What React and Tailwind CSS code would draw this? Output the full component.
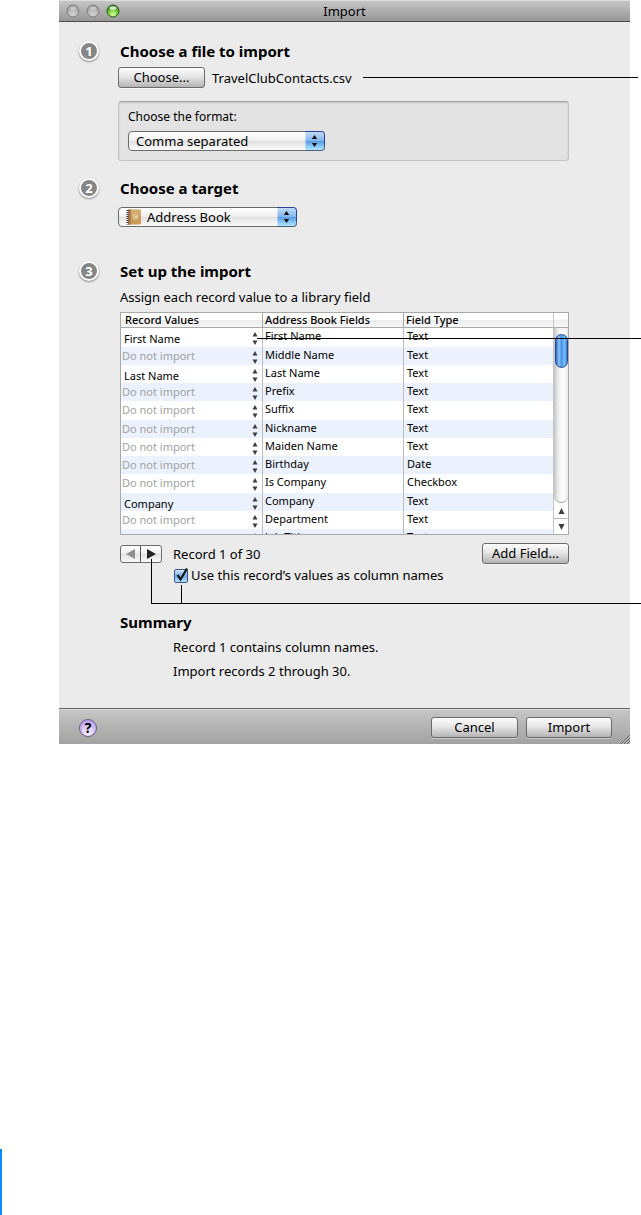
import React from "react";

const rows = [
  ["First Name", "First Name", "Text"],
  ["", "Middle Name", "Text"],
  ["Last Name", "Last Name", "Text"],
  ["", "Prefix", "Text"],
  ["", "Suffix", "Text"],
  ["", "Nickname", "Text"],
  ["", "Maiden Name", "Text"],
  ["", "Birthday", "Date"],
  ["", "Is Company", "Checkbox"],
  ["Company", "Company", "Text"],
  ["", "Department", "Text"],
  ["", "Job Title", "Text"],
];

const silver =
  "border border-[#6b6b6b] bg-[linear-gradient(#ffffff_0%,#f1f1f1_45%,#e2e2e2_52%,#fbfbfb_100%)]";
const push =
  "flex h-[21px] items-center justify-center rounded-[3px] border border-[#6b6b6b] bg-[linear-gradient(#fdfdfd_0%,#e6e6e6_45%,#b4b4b4_100%)] text-[13px] leading-none shadow-[0_1px_0_rgba(255,255,255,0.4)]";

function Light({ green }) {
  return (
    <svg width="14" height="14" viewBox="0 0 14 14" aria-hidden="true">
      <defs>
        <radialGradient id={green ? "lg" : "lx"} cx="50%" cy="80%" r="75%">
          <stop offset="0" stopColor={green ? "#d4ff9c" : "#d2d2d2"} />
          <stop offset="0.5" stopColor={green ? "#7fd043" : "#bababa"} />
          <stop offset="1" stopColor={green ? "#2e7a13" : "#8f8f8f"} />
        </radialGradient>
      </defs>
      <circle cx="7" cy="7" r="6" fill={green ? "url(#lg)" : "url(#lx)"} stroke={green ? "#2f5a1d" : "#818181"} />
      <ellipse cx="7" cy="4" rx="3.4" ry="1.8" fill="#fff" opacity={green ? 0.75 : 0.35} />
    </svg>
  );
}

function Badge({ n }) {
  return (
    <span className="flex size-5 shrink-0 items-center justify-center rounded-full border-2 border-white bg-[#868686] text-[13px] leading-none font-bold text-white shadow-[0_1px_2px_rgba(0,0,0,0.45)]">
      {n}
    </span>
  );
}

function Heading({ n, children }) {
  return (
    <div className="flex h-5 items-center">
      <Badge n={n} />
      <h2 className="ml-[21px] text-[15px] leading-5 font-bold">{children}</h2>
    </div>
  );
}

function BlueCap() {
  return (
    <svg className="pointer-events-none absolute top-0 right-0" width="20" height="20" viewBox="0 0 20 20" aria-hidden="true">
      <defs>
        <linearGradient id="cap" x1="0" y1="0" x2="0" y2="1">
          <stop offset="0" stopColor="#c4dcf6" />
          <stop offset="0.47" stopColor="#86b8ee" />
          <stop offset="0.53" stopColor="#5a9fe8" />
          <stop offset="1" stopColor="#b4ebff" />
        </linearGradient>
      </defs>
      <path d="M0.5 0.5H16.5Q19.5 0.5 19.5 3.5V16.5Q19.5 19.5 16.5 19.5H0.5Z" fill="url(#cap)" />
      <path d="M0 0.5H16.5Q19.5 0.5 19.5 3.5V14" fill="none" stroke="#2c3f98" />
      <path d="M19.5 14V16.5Q19.5 19.5 16.5 19.5H0" fill="none" stroke="#4c5b78" />
      <path d="M9.500 4L12.200 8H6.800ZM9.500 16L12.200 12H6.800Z" fill="#111" />
    </svg>
  );
}

function Popup({ label, value, wide, icon }) {
  return (
    <div className={wide ? "relative h-5 w-[197px]" : "relative h-5 w-[179px]"}>
      <select
        aria-label={label}
        className={`h-5 w-full appearance-none rounded-[4px] text-[13px] leading-[18px] ${silver} ${icon ? "pl-[28px]" : "pl-[7px]"}`}
      >
        <option>{value}</option>
      </select>
      {icon}
      <BlueCap />
    </div>
  );
}

function BookIcon() {
  return (
    <svg className="pointer-events-none absolute top-[2px] left-[8px]" width="16" height="16" viewBox="0 0 16 16" aria-hidden="true">
      <rect x="2" y="0.500" width="13" height="15" rx="1" fill="#c99c58" />
      <rect x="2" y="0.500" width="3" height="15" fill="#a87b50" />
      <rect x="5" y="1" width="10" height="6" fill="#d9b478" opacity="0.6" />
      <path d="M1.500 1V15.500" stroke="#3d302b" strokeWidth="2" strokeDasharray="1 1" />
      <circle cx="9.500" cy="8" r="2.500" fill="none" stroke="#f4e3bf" strokeWidth="0.700" />
      <circle cx="9.500" cy="8" r="0.900" fill="#f4e3bf" />
      <path d="M10.600 7V9" stroke="#f4e3bf" strokeWidth="0.700" />
    </svg>
  );
}

function Row({ value, field, type, index }) {
  // Every fourth row is a pixel taller, for an average pitch just over 18px.
  return (
    <tr className={`${index % 4 ? "h-[18px]" : "h-[19px]"} ${index % 2 ? "bg-[#ebf1fd]" : "bg-white"}`}>
      <td className="border-r border-[#bdbdbd] p-0 align-top">
        <div className="relative h-[18px]">
          <select
            aria-label={`Record value for ${field}`}
            className={
              value
                ? "block h-[18px] w-full appearance-none pt-[3px] pl-[3px] text-[11px] leading-[15px] text-black"
                : "block h-[18px] w-full appearance-none pl-px text-[11px] leading-4 text-[#a2a2a2]"
            }
          >
            <option>{value || "Do not import"}</option>
          </select>
          <svg className="pointer-events-none absolute top-[4px] right-[4px]" width="6" height="13" viewBox="0 0 6 13" aria-hidden="true">
            <path d="M3 0L5.500 4.500H0.500ZM3 13L5.500 8.500H0.500Z" fill="#3c3c3c" />
          </svg>
        </div>
      </td>
      <td className="border-r border-[#bdbdbd] p-0 pl-[2px] align-top leading-4">{field}</td>
      <td className="p-0 pl-[3px] align-top leading-4">{type}</td>
    </tr>
  );
}

function ScrollBar() {
  return (
    <div className="flex w-[15px] shrink-0 flex-col border-l border-[#c4c4c4] bg-white">
      <div className="h-[15px] border-b border-[#a9a9a9] bg-[linear-gradient(#ffffff_0%,#ffffff_45%,#ececec_50%,#f8f8f8_100%)]" />
      <div className="flex-1 rounded-b-[7px] border-b border-[#a0a0a0] bg-[linear-gradient(90deg,#c4c4c4_0%,#eeeeee_30%,#ffffff_65%,#e8e8e8_100%)] pt-[6px]">
        <div className="mx-auto h-[34px] w-[13px] rounded-full border border-[#27488f] bg-[linear-gradient(90deg,#2a63c4_0%,#8cbcf2_25%,#7db4f0_38%,#3f8de6_45%,#77c4ff_80%,#2f6fc9_100%)]" />
      </div>
      <button type="button" aria-label="Scroll up" className="flex h-4 items-center justify-center border-b border-[#b9b9b9]">
        <svg width="7" height="6" viewBox="0 0 7 6" aria-hidden="true"><path d="M3.500 0L6.500 6H0.500Z" fill="#3d3d3d" /></svg>
      </button>
      <button type="button" aria-label="Scroll down" className="flex h-[15px] items-center justify-center">
        <svg width="7" height="6" viewBox="0 0 7 6" aria-hidden="true"><path d="M3.500 6L6.500 0H0.500Z" fill="#3d3d3d" /></svg>
      </button>
    </div>
  );
}

const th = "h-[15px] border-b border-[#a9a9a9] p-0 text-left text-[11px] leading-[14px] font-medium";

export default function App() {
  return (
    <div className="relative flex min-h-screen flex-col bg-white font-['Noto_Sans','Open_Sans',sans-serif] text-black">
      <main className="mr-[11px] ml-[59px] bg-[#ebebeb] text-[13px]">
        <header className="grid h-[22px] grid-cols-[1fr_auto_1fr] items-center border-t border-b border-t-[#dedede] border-b-[#4c4c4c] bg-[linear-gradient(#c5c5c5,#979797)]">
          <div className="flex gap-[6px] pl-[7px]">
            <Light />
            <Light />
            <Light green />
          </div>
          <h1 className="text-[13px] leading-5">Import</h1>
        </header>

        <div className="pt-[19px] pr-[61px] pl-[20px]">
          <section>
            <Heading n="1">Choose a file to import</Heading>
            <div className="mt-[6px] flex items-center pl-[39px]">
              <button type="button" className={`${push} w-[87px]`}>Choose...</button>
              <span className="ml-[7px] text-[13px] leading-5">TravelClubContacts.csv</span>
            </div>
            <div className="mt-[13px] ml-[39px] h-[60px] rounded-[3px] border border-[#c4c4c4] border-t-[#a4a4a4] bg-[#e3e3e3] px-[9px] pt-[6px] shadow-[inset_0_1px_2px_rgba(0,0,0,0.15)]">
              <div className="mb-[5px] text-[12px] leading-[18px]">Choose the format:</div>
              <Popup label="Choose the format" value="Comma separated" wide />
            </div>
          </section>

          <section className="mt-[17px]">
            <Heading n="2">Choose a target</Heading>
            <div className="mt-[9px] pl-[39px]">
              <Popup label="Choose a target" value="Address Book" icon={<BookIcon />} />
            </div>
          </section>

          <section className="mt-[34px]">
            <Heading n="3">Set up the import</Heading>
            <div className="pl-[41px]">
              <p className="mt-[6px] text-[13px] leading-[20px]">Assign each record value to a library field</p>
              <div className="mt-[5px] flex h-[223px] overflow-hidden border border-[#a9a9a9] bg-white">
                <div className="min-w-0 flex-1 overflow-hidden">
                  <table className="w-full table-fixed border-separate border-spacing-0 text-[11px]">
                    <colgroup>
                      <col className="w-[142px]" />
                      <col className="w-[141px]" />
                      <col />
                    </colgroup>
                    <thead>
                      <tr className="bg-[linear-gradient(#ffffff_0%,#ffffff_45%,#ececec_50%,#f8f8f8_100%)]">
                        <th className={`${th} border-r pl-[4px]`}>Record Values</th>
                        <th className={`${th} border-r pl-[2px]`}>Address Book Fields</th>
                        <th className={`${th} pl-[2px]`}>Field Type</th>
                      </tr>
                    </thead>
                    <tbody>
                      {rows.map(([value, field, type], i) => (
                        <Row key={field} value={value} field={field} type={type} index={i} />
                      ))}
                    </tbody>
                  </table>
                </div>
                <ScrollBar />
              </div>

              <div className="mt-[8px] flex items-center">
                <div className={`flex h-[18px] w-[42px] overflow-hidden rounded-[3px] ${silver}`}>
                  <button type="button" aria-label="Previous record" className="flex w-5 items-center justify-center border-r border-[#555]">
                    <svg width="9" height="10" viewBox="0 0 9 10" aria-hidden="true"><path d="M0 5L9 0V10Z" fill="#8e8e8e" /></svg>
                  </button>
                  <button type="button" aria-label="Next record" className="flex flex-1 items-center justify-center">
                    <svg width="9" height="10" viewBox="0 0 9 10" aria-hidden="true"><path d="M9 5L0 0V10Z" fill="#222" /></svg>
                  </button>
                </div>
                <span className="ml-[11px] text-[13px] leading-5">Record 1 of 30</span>
                <button type="button" className={`${push} ml-auto w-[87px]`}>Add Field...</button>
              </div>
              <label className="mt-[2px] flex h-5 items-center pl-[54px] text-[13px]">
                <span className="relative flex size-[14px]">
                  <input type="checkbox" defaultChecked className="size-[14px] appearance-none rounded-[2px] border border-[#3d5486] bg-[linear-gradient(#d5e6fa_0%,#72abeb_50%,#b2e4ff_100%)]" />
                  <svg className="pointer-events-none absolute -top-[2px] left-0" width="17" height="16" viewBox="0 0 17 16" aria-hidden="true">
                    <path d="M3.500 8L6.500 12.500L13 1.500" fill="none" stroke="#111" strokeWidth="2.200" />
                  </svg>
                </span>
                <span className="ml-[3px]">Use this record’s values as column names</span>
              </label>
            </div>
          </section>

          <section className="mt-[26px] pl-[41px]">
            <h2 className="text-[15px] leading-5 font-bold">Summary</h2>
            <div className="pt-[3px] pb-[25px] pl-[53px] text-[13px] leading-6">
              <p>Record 1 contains column names.</p>
              <p>Import records 2 through 30.</p>
            </div>
          </section>
        </div>

        <footer className="relative flex h-[36px] items-center border-t border-[#666] bg-[linear-gradient(#c6c6c6,#a2a2a2)] pt-[2px] pr-[18px] pl-[20px] shadow-[inset_0_1px_0_#dcdcdc]">
          <button type="button" aria-label="Help" className="flex size-[18px] items-center justify-center rounded-full border border-[#6d5a86] bg-[radial-gradient(circle_at_50%_80%,#fbf5ff_0%,#cdb8f2_55%,#a98be0_100%)] text-[14px] leading-none font-bold">?</button>
          <div className="ml-auto flex gap-2">
            <button type="button" className={`${push} w-[87px]`}>Cancel</button>
            <button type="button" className={`${push} w-[86px]`}>Import</button>
          </div>
          <svg className="absolute right-0 bottom-0" width="10" height="10" viewBox="0 0 10 10" aria-hidden="true">
            <path d="M1 10L10 1M4 10L10 4M7 10L10 7" stroke="#626262" />
            <path d="M2 10L10 2M5 10L10 5M8 10L10 8" stroke="#d6d6d6" strokeWidth="0.600" />
          </svg>
        </footer>
      </main>

      {/* Callout rules drawn over the window */}
      <div className="pointer-events-none absolute top-[77px] right-[3px] left-[363px] h-px bg-black" />
      <div className="pointer-events-none absolute top-[338px] right-0 left-[257px] h-px bg-black" />
      <div className="pointer-events-none absolute top-[559px] right-0 left-[151px] h-[45px] border-b border-l border-black" />
      <div className="pointer-events-none absolute top-[585px] left-[181px] h-[18px] w-px bg-black" />

      <div className="mt-auto h-[66px] w-[2px] bg-[#0a8cff]" />
    </div>
  );
}
